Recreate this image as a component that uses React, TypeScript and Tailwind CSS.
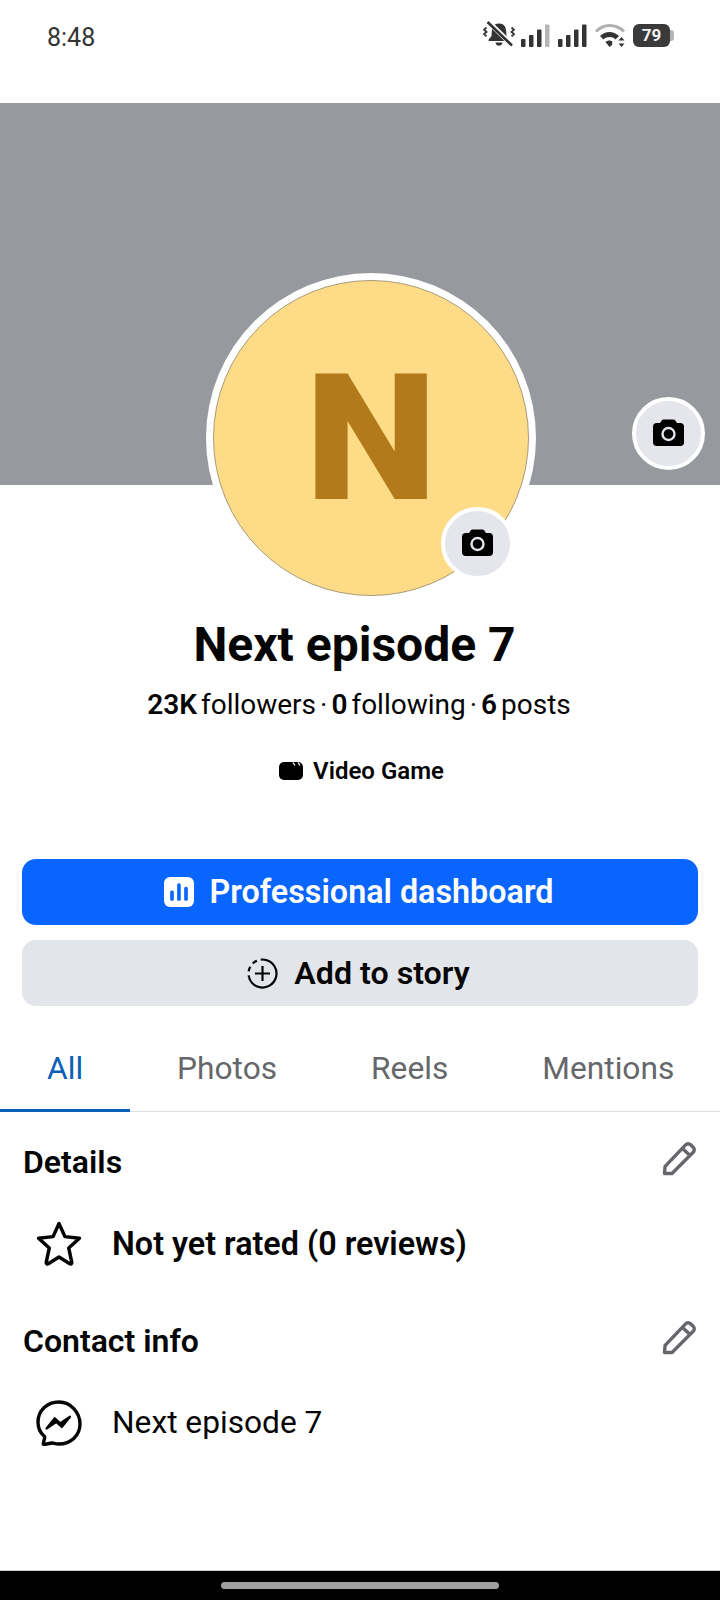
const Signal = ({ dim }: { dim?: boolean }) => (
  <svg width="29" height="24" viewBox="0 0 29 24" className="block">
    <rect x="0" y="15" width="4.5" height="8" rx="1" fill="#333" />
    <rect x="8" y="11" width="4.5" height="12" rx="1" fill="#333" />
    <rect x="16" y="5.5" width="4.5" height="17.5" rx="1" fill="#333" />
    <rect x="24" y="0.5" width="4.5" height="22.5" rx="1" fill={dim ? "#b5b5b5" : "#333"} />
  </svg>
);

const StatusIcons = () => (
  <div className="flex items-center">
    <svg width="32" height="28" viewBox="0 0 32 28" className="mr-[6px] block">
      <path d="M16 2.500c-4.800 0-7 3.400-7.200 7.700L8.500 15l-2.800 3.400c-.5.7-.1 1.600.8 1.600h19c.9 0 1.300-.9.8-1.600L23.500 15l-.3-4.800C23 5.900 20.800 2.500 16 2.500z" fill="#333" />
      <path d="M12.500 21.500h7c-.4 2.100-1.700 3.200-3.500 3.200s-3.100-1.100-3.500-3.200z" fill="#333" />
      <path d="M5 0.500l23 22.500" stroke="#fff" strokeWidth="5" />
      <path d="M4.500 1l24.500 23.500" stroke="#333" strokeWidth="2.600" />
      <path d="M3.500 6.500l-2.500 2.200 2.500 2.200-2.500 2.200 2.500 2.200M28.500 6.500l2.500 2.200-2.500 2.200 2.500 2.200-2.500 2.200" stroke="#333" strokeWidth="1.800" fill="none" />
    </svg>
    <div className="mt-[1px] mr-[8px]"><Signal dim /></div>
    <div className="mt-[1px] mr-[8px]"><Signal /></div>
    <svg width="32" height="24" viewBox="0 0 32 24" className="mt-[1px] mr-[6px] block">
      <path d="M1 7.500C5 3.500 9.500 1.500 14.500 1.500S25 3.500 29 7.500" stroke="#b0b0b0" strokeWidth="3" fill="none" />
      <path d="M5 12c3-2.800 6-4 9.500-4S21 9.200 24 12l-3.500 3.500c-1.800-1.600-3.800-2.400-6-2.400s-4.200.8-6 2.400z" fill="#333" />
      <path d="M10.500 18c1.200-1 2.500-1.500 4-1.500 1 0 1.900.2 2.700.7v3.500l-2.700 2.300z" fill="#333" />
      <path d="M26.500 13l3 3.500h-6zM26.500 23l3-3.500h-6z" fill="#333" />
    </svg>
    <div className="relative flex h-[23px] w-[37px] items-center justify-center rounded-[6px] bg-[#3a3a3a] text-[17px] leading-none font-bold text-[#f2f2f2]">
      79
    </div>
    <div className="h-[11px] w-[4px] rounded-r-[3px] bg-[#b5b5b5]" />
  </div>
);

const CameraGlyph = () => (
  <svg width="31" height="27" viewBox="0 0 31 27" className="mb-[3px] block">
    <path
      d="M10.500 0.500h10c.8 0 1.400.4 1.800 1L24 4h3.500C29.500 4 31 5.500 31 7.500V23.500C31 25.500 29.500 27 27.500 27H3.500C1.500 27 0 25.500 0 23.500V7.500C0 5.500 1.500 4 3.500 4H7l1.700-2.500c.4-.6 1-1 1.800-1z"
      fill="#000"
    />
    <circle cx="15.500" cy="15" r="6" fill="none" stroke="#e4e6eb" strokeWidth="2.400" />
  </svg>
);

const Pencil = () => (
  <svg width="35" height="35" viewBox="0 0 35 35" className="mb-[6px] block">
    <path
      d="M2.500 32.500l.6-7.200L23.600 3.800a3.500 3.500 0 0 1 5 0l2.600 2.500a3.500 3.500 0 0 1 0 5L10 32.500z"
      fill="none"
      stroke="#65676b"
      strokeWidth="3.400"
      strokeLinejoin="round"
    />
    <path d="M20.500 7.500l7.500 7" stroke="#65676b" strokeWidth="3.400" />
  </svg>
);

const Star = () => (
  <svg width="48" height="46" viewBox="0 0 46 45" className="block">
    <path
      d="M23 2.500l5.800 12.800 14.200 1.500-10.500 9.600 3 14c.2 1.300-.9 2-2 1.400L23 35.300 12.500 41.800c-1.100.6-2.200-.1-2-1.400l3-14L3 16.800l14.200-1.500z"
      fill="none"
      stroke="#050505"
      strokeWidth="3.400"
      strokeLinejoin="round"
    />
  </svg>
);

const MessengerMark = () => (
  <svg width="48" height="46" viewBox="0 0 46 46" className="block">
    <path
      d="M23 2C11 2 2 10.800 2 22c0 5.800 2.300 10.800 6.200 14.300.5.500.5 1 .4 1.800l-1.300 5.300c-.2.800.4 1.300 1.200 1.100l7.300-1.500c.5-.1 1-.1 1.500.1 1.900.5 3.800.9 5.700.9 12 0 21-8.800 21-20S35 2 23 2z"
      fill="none"
      stroke="#050505"
      strokeWidth="3.400"
      strokeLinejoin="round"
    />
    <path d="M10.500 28.500l8.200-10.300 5.600 5 9.700-6.500-8.200 10.300-5.600-5z" fill="#050505" stroke="#050505" strokeWidth="2.200" strokeLinejoin="round" />
  </svg>
);

const tabs = ["All", "Photos", "Reels", "Mentions"];

export default function App() {
  return (
    <div className="relative flex h-[1600px] w-[720px] flex-col overflow-hidden bg-white font-['Roboto',sans-serif] text-[#050505]">
      {/* System status bar */}
      <div className="flex h-[103px] items-start justify-between pt-[21px] pr-[46px] pl-[47px]">
        <span className="mt-[2px] text-[25px] leading-[30px] text-[#333]">8:48</span>
        <StatusIcons />
      </div>

      {/* Cover photo */}
      <div className="relative h-[382px] bg-[#96999e]">
        <button className="absolute top-[294px] right-[15px] flex h-[73px] w-[73px] items-center justify-center rounded-full border-4 border-white bg-[#e4e6eb]">
          <CameraGlyph />
        </button>
      </div>

      {/* Avatar overlapping the cover */}
      <div className="relative z-10 -mt-[212px] ml-[206px] h-[330px] w-[330px] rounded-full bg-white p-[7px]">
        <div className="flex h-full w-full items-center justify-center rounded-full border border-[#a89a78] bg-[#fedb87] text-[177px] leading-none font-black text-[#b27a1a]">
          <span className="scale-x-[1.06]">N</span>
        </div>
        <button className="absolute top-[234px] left-[235px] flex h-[73px] w-[73px] items-center justify-center rounded-full border-4 border-white bg-[#e4e6eb]">
          <CameraGlyph />
        </button>
      </div>

      {/* Page name and counters */}
      <h1 className="mt-[12px] pr-[11px] text-center text-[48px] leading-[60px] font-bold">Next episode 7</h1>
      <p className="mt-[14px] flex items-center justify-center pr-[2px] text-[28px] leading-[32px]">
        <b className="mr-[4px] font-semibold">23K</b>followers<span className="mx-[4px]">·</span>
        <b className="mr-[4px] font-semibold">0</b>following<span className="mx-[4px]">·</span>
        <b className="mr-[4px] font-semibold">6</b>posts
      </p>
      <div className="mt-[35px] flex items-center justify-center gap-[10px] pl-[3px]">
        <svg width="24" height="18" viewBox="0 0 24 18" className="block">
          <rect width="24" height="18" rx="5" fill="#000" />
          <path d="M14 0.500l2 3M19 0.500l2 3" stroke="#fff" strokeWidth="1.300" />
        </svg>
        <span className="text-[24px] leading-[30px] font-semibold">Video Game</span>
      </div>

      {/* Primary actions */}
      <div className="mt-[73px] flex flex-col gap-[15px] px-[22px]">
        <button className="flex h-[66px] items-center justify-center gap-[16px] rounded-[14px] bg-[#0866ff] pr-[3px] text-[32.300px] font-semibold text-white">
          <svg width="30" height="30" viewBox="0 0 29 29" className="block">
            <rect width="29" height="29" rx="6" fill="#fff" />
            <rect x="6" y="13" width="3.500" height="10" rx="1.500" fill="#0866ff" />
            <rect x="12.700" y="6" width="3.500" height="17" rx="1.500" fill="#0866ff" />
            <rect x="19.500" y="9.500" width="3.500" height="13.500" rx="1.500" fill="#0866ff" />
          </svg>
          Professional dashboard
        </button>
        <button className="flex h-[66px] items-center justify-center gap-[16px] rounded-[14px] bg-[#e2e5e9] pr-[3px] text-[32.200px] font-semibold">
          <svg width="31" height="31" viewBox="0 0 31 31" className="block">
            <circle cx="15.500" cy="15.500" r="14" fill="none" stroke="#050505" strokeWidth="2.200" strokeDasharray="60 4 5 4 5 4" transform="rotate(-75 15.500 15.500)" />
            <path d="M15.500 8v15M8 15.500h15" stroke="#050505" strokeWidth="2.200" />
          </svg>
          Add to story
        </button>
      </div>

      {/* Tabs */}
      <div className="mt-[43px] flex border-b border-[#dcdee2]">
        {tabs.map((t, i) => (
          <div
            key={t}
            className={
              i === 0
                ? "-mb-px border-b-[3px] border-[#0a5fb8] px-[47px] pb-[20px] text-[31.700px] leading-[40px] text-[#0a5fb8]"
                : "px-[47px] pb-[20px] text-[31.700px] leading-[40px] whitespace-nowrap text-[#65676b]"
            }
          >
            {t}
          </div>
        ))}
      </div>

      {/* Details section */}
      <div className="mt-[29px] flex items-center justify-between pr-[23px] pl-[23px]">
        <h2 className="text-[32px] leading-[40px] font-semibold">Details</h2>
        <Pencil />
      </div>
      <div className="mt-[39px] flex items-center gap-[29px] pl-[35px]">
        <Star />
        <span className="text-[32.300px] leading-[44px] font-semibold">Not yet rated (0 reviews)</span>
      </div>

      {/* Contact section */}
      <div className="mt-[53px] flex items-center justify-between pr-[23px] pl-[23px]">
        <h2 className="text-[32px] leading-[40px] font-semibold">Contact info</h2>
        <Pencil />
      </div>
      <div className="mt-[39px] flex items-center gap-[29px] pl-[35px]">
        <MessengerMark />
        <span className="text-[31.700px] leading-[44px]">Next episode 7</span>
      </div>

      {/* Android gesture bar */}
      <div className="mt-auto flex h-[30px] items-start justify-center border-t border-[#cfcfcf] bg-black pt-[11px]">
        <div className="h-[7px] w-[278px] rounded-full bg-[#9e9e9e]" />
      </div>
    </div>
  );
}
